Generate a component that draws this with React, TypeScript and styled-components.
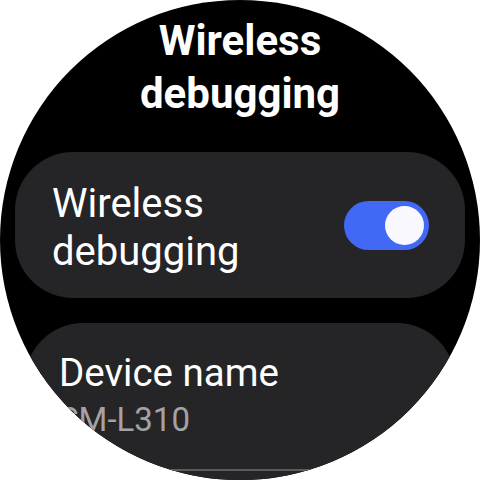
import React, { useState } from "react";
import styled, { createGlobalStyle } from "styled-components";

const GlobalStyle = createGlobalStyle`
  html, body {
    margin: 0;
    padding: 0;
    background: #ffffff;
  }
  body {
    font-family: Roboto, "Liberation Sans", sans-serif;
  }
`;

const Screen = styled.div`
  width: 480px;
  height: 480px;
  border-radius: 50%;
  overflow: hidden;
  background: #000000;
  display: flex;
  flex-direction: column;
`;

const Title = styled.h1`
  margin: 14px 0 0;
  color: #ffffff;
  font-size: 42px;
  font-weight: 700;
  line-height: 53px;
  text-align: center;
`;

const Card = styled.div<{ $inset: number }>`
  margin: 0 ${(p) => p.$inset}px;
  background: #252527;
  border-radius: 58px;
  box-sizing: border-box;
`;

const ToggleCard = styled(Card)`
  margin-top: 32px;
  height: 146px;
  padding: 6px 36px 0 37px;
  display: flex;
  align-items: center;
  justify-content: space-between;
`;

const InfoCard = styled(Card)`
  margin-top: 25px;
  padding: 26px 0 0 34px;
  display: flex;
  flex-direction: column;
  flex: 1;
`;

const Label = styled.div<{ $size: number }>`
  color: #ffffff;
  font-size: ${(p) => p.$size}px;
  line-height: 48px;
`;

const Value = styled.div`
  color: #a3a3a6;
  font-size: 33px;
  line-height: 46px;
`;

const Divider = styled.div`
  margin: 26px 0 0 -34px;
  height: 2px;
  background: #5c5c5e;
`;

const Track = styled.button<{ $on: boolean }>`
  width: 85px;
  height: 49px;
  margin-top: -6px;
  border: none;
  border-radius: 25px;
  padding: 0 5px;
  background: ${(p) => (p.$on ? "#4169f6" : "#5a5a5e")};
  display: flex;
  align-items: center;
  justify-content: ${(p) => (p.$on ? "flex-end" : "flex-start")};
  cursor: pointer;
  flex-shrink: 0;
`;

const Thumb = styled.span`
  width: 39px;
  height: 39px;
  border-radius: 50%;
  background: #f8f8fe;
`;

export default function App() {
  const [enabled, setEnabled] = useState(true);

  return (
    <>
      <GlobalStyle />
      <Screen>
        <Title>
          Wireless
          <br />
          debugging
        </Title>
        <ToggleCard $inset={15}>
          <Label $size={40}>
            Wireless
            <br />
            debugging
          </Label>
          <Track $on={enabled} onClick={() => setEnabled(!enabled)}>
            <Thumb />
          </Track>
        </ToggleCard>
        <InfoCard $inset={25}>
          <Label $size={38.5}>Device name</Label>
          <Value>SM-L310</Value>
          <Divider />
        </InfoCard>
      </Screen>
    </>
  );
}
